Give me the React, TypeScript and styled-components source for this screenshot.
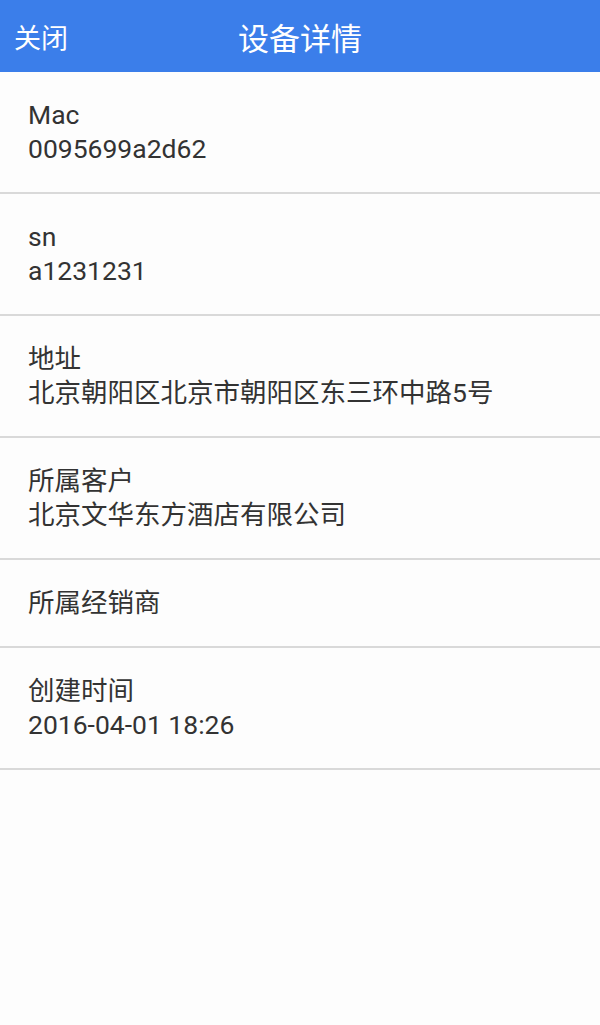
import styled, { createGlobalStyle } from 'styled-components';

const GlobalStyle = createGlobalStyle`
  html, body {
    margin: 0;
    padding: 0;
    background: #fdfdfd;
    font-family: 'Roboto', 'Noto Sans CJK SC', sans-serif;
  }
`;

const Page = styled.div`
  width: 600px;
  min-height: 1025px;
  background: #fdfdfd;
`;

const Header = styled.header`
  position: relative;
  height: 72px;
  background: #3b7eea;
  display: flex;
  align-items: center;
  justify-content: center;
  color: #fff;
`;

const Close = styled.span`
  position: absolute;
  left: 14px;
  top: 50%;
  transform: translateY(-50%);
  font-size: 27px;
`;

const Title = styled.h1`
  margin: 0;
  font-size: 31px;
  font-weight: 400;
`;

const Row = styled.div`
  padding: 26px 28px;
  border-bottom: 2px solid #d9d9d9;
  color: #333;
  font-size: 26.5px;
  line-height: 34px;
`;

const Label = styled.div``;

const Value = styled.div`
  &:empty {
    display: none;
  }
`;

const fields = [
  { label: 'Mac', value: '0095699a2d62' },
  { label: 'sn', value: 'a1231231' },
  { label: '地址', value: '北京朝阳区北京市朝阳区东三环中路5号' },
  { label: '所属客户', value: '北京文华东方酒店有限公司' },
  { label: '所属经销商', value: '' },
  { label: '创建时间', value: '2016-04-01 18:26' },
];

export default function App() {
  return (
    <Page>
      <GlobalStyle />
      <Header>
        <Close>关闭</Close>
        <Title>设备详情</Title>
      </Header>
      {fields.map((f) => (
        <Row key={f.label}>
          <Label>{f.label}</Label>
          <Value>{f.value}</Value>
        </Row>
      ))}
    </Page>
  );
}
